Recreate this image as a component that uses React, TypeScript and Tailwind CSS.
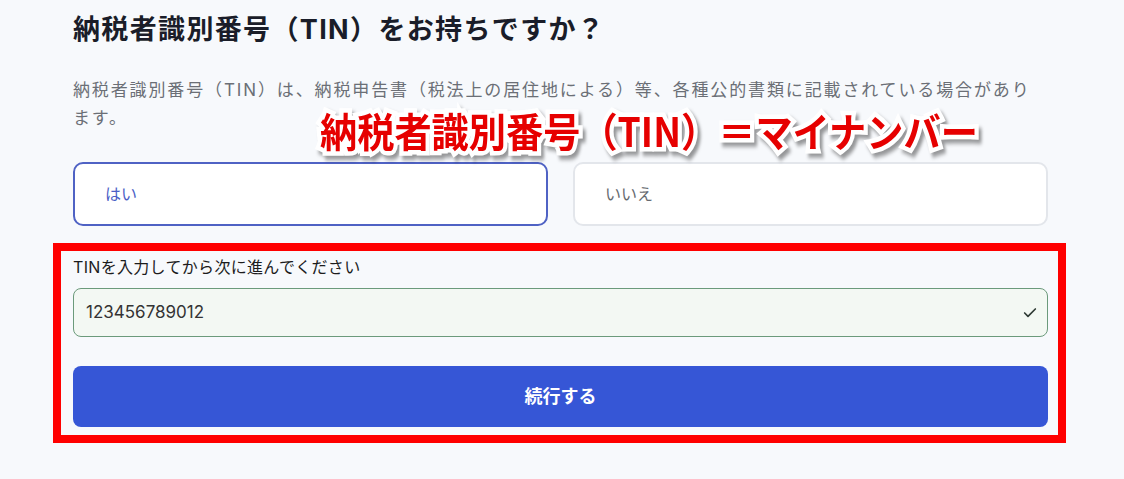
import { Check } from "lucide-react"

const font = "font-['Inter','Noto_Sans_CJK_JP',sans-serif]"

export default function App() {
  return (
    <div className={`min-h-screen bg-[#f7f9fc] ${font}`}>
      <div className="relative ml-[73px] w-[975px] pt-3">
        <h1 className="text-[27px] leading-[36px] font-bold tracking-[0.05em] text-[#1a1d29]">
          納税者識別番号（TIN）をお持ちですか？
        </h1>

        <p className="mt-7 text-[17px] leading-[28px] tracking-[0.11em] text-[#6b6f76]">
          納税者識別番号（TIN）は、納税申告書（税法上の居住地による）等、各種公的書類に記載されている場合があります。
        </p>

        <div className="mt-[30px] grid grid-cols-2 gap-[25px]">
          <button className="h-16 rounded-[10px] border-2 border-[#4f62c4] bg-white pl-[30px] text-left text-[16px] text-[#4c5fc6]">
            はい
          </button>
          <button className="h-16 rounded-[10px] border-2 border-[#e3e6eb] bg-white pl-[30px] text-left text-[16px] text-[#666a70]">
            いいえ
          </button>
        </div>

        {/* red annotation frame */}
        <div className="mt-[17px] -ml-[20px] -mr-[18px] border-8 border-[#ff0000] pl-[12px] pr-[10px] pt-1 pb-2">
          <label className="block text-[16px] leading-6 tracking-[0.02em] text-[#1c1c1c]">
            TINを入力してから次に進んでください
          </label>
          <div className="mt-[9px] flex h-[49px] items-center justify-between rounded-lg border border-[#6b9a7b] bg-[#f3f8f3] pl-3 pr-[9px]">
            <span className="text-[17px] text-[#333]">123456789012</span>
            <Check className="h-4 w-4 text-[#2f3b35]" strokeWidth={2.5} />
          </div>
          <button className="mt-[29px] flex h-[61px] w-full items-center justify-center rounded-lg bg-[#3656d6] text-[18px] font-semibold text-white">
            続行する
          </button>
        </div>

        {/* overlay caption */}
        <div className="absolute left-[247px] top-[110px] origin-left scale-x-[0.93] whitespace-nowrap text-[40px] leading-none font-bold text-[#e60000] [paint-order:stroke_fill] [-webkit-text-stroke:9px_#fff] drop-shadow-[3px_4px_2px_rgba(0,0,0,0.4)] font-['Noto_Sans_CJK_JP',sans-serif]">
          納税者識別番号（TIN）＝マイナンバー
        </div>
      </div>
    </div>
  )
}
